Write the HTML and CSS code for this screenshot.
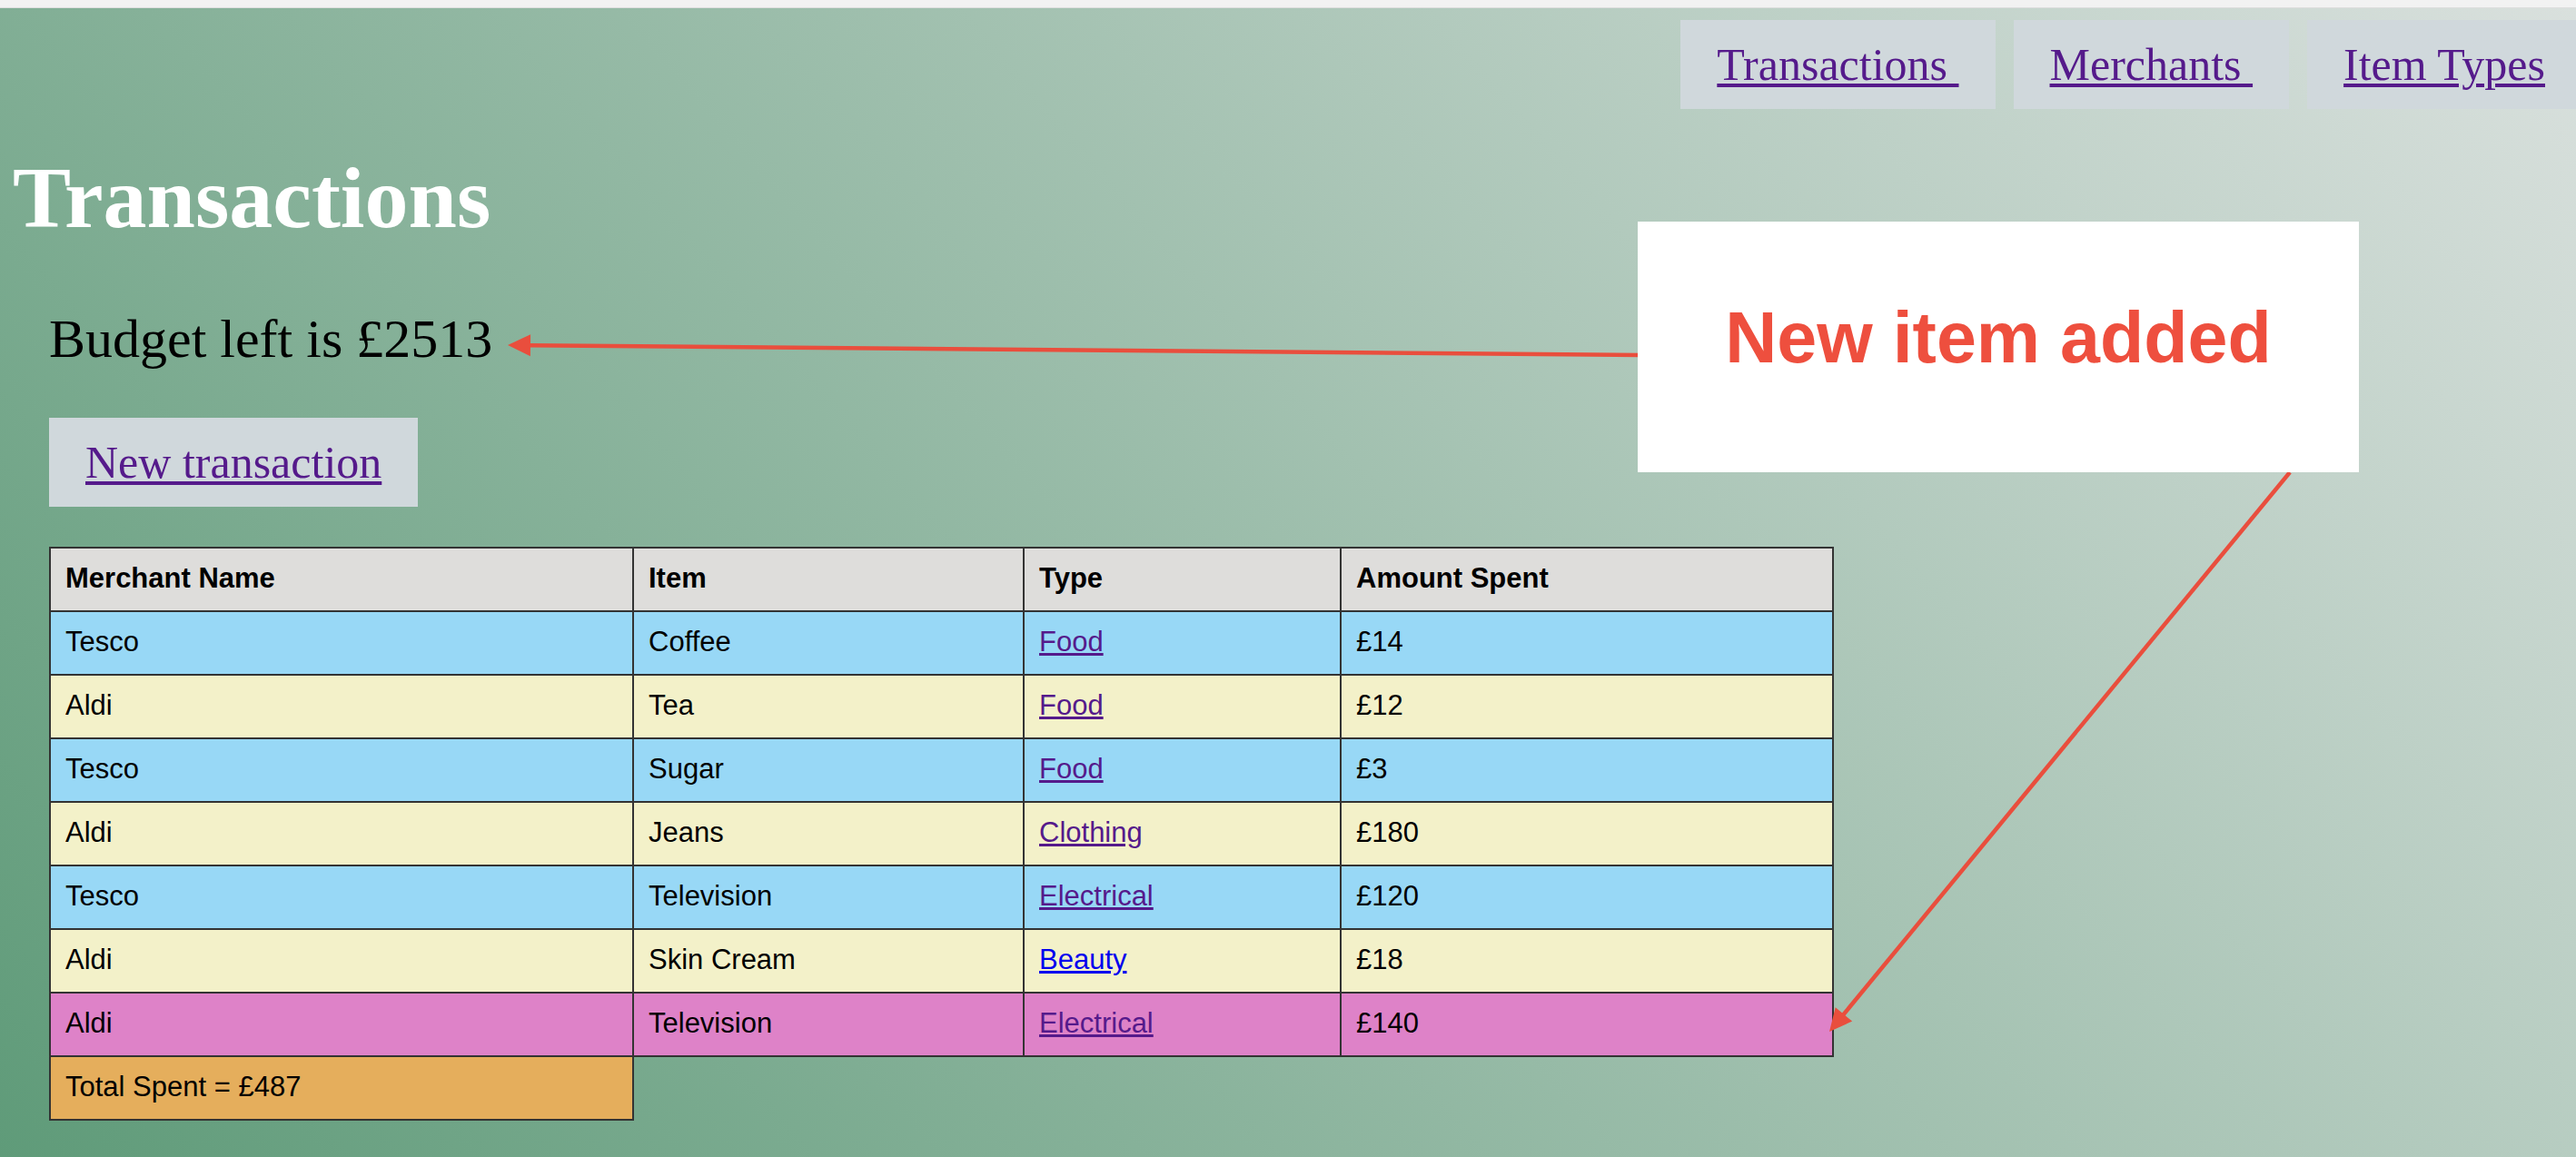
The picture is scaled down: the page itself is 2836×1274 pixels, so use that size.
FILE: index.html
```html
<!DOCTYPE html>
<html lang="en">
<head>
<meta charset="utf-8">
<title>Transactions</title>
<link rel="stylesheet" href="styles.css">
</head>
<body>
<div class="chrome"></div>
<div class="page">
  <nav class="nav">
    <a class="nav-btn" href="#">Transactions&nbsp;</a>
    <a class="nav-btn" href="#">Merchants&nbsp;</a>
    <a class="nav-btn" href="#">Item Types</a>
  </nav>
  <h1 class="title">Transactions</h1>
  <div class="content">
    <p class="budget">Budget left is £2513</p>
    <div class="actions"><a class="btn" href="#">New transaction</a></div>
    <table class="tx">
      <colgroup>
        <col class="c1"><col class="c2"><col class="c3"><col class="c4">
      </colgroup>
      <thead>
        <tr class="head"><th>Merchant Name</th><th>Item</th><th>Type</th><th>Amount Spent</th></tr>
      </thead>
      <tbody>
        <tr class="blue"><td>Tesco</td><td>Coffee</td><td><a href="#">Food</a></td><td>£14</td></tr>
        <tr class="yellow"><td>Aldi</td><td>Tea</td><td><a href="#">Food</a></td><td>£12</td></tr>
        <tr class="blue"><td>Tesco</td><td>Sugar</td><td><a href="#">Food</a></td><td>£3</td></tr>
        <tr class="yellow"><td>Aldi</td><td>Jeans</td><td><a href="#">Clothing</a></td><td>£180</td></tr>
        <tr class="blue"><td>Tesco</td><td>Television</td><td><a href="#">Electrical</a></td><td>£120</td></tr>
        <tr class="yellow"><td>Aldi</td><td>Skin Cream</td><td><a class="fresh" href="#new">Beauty</a></td><td>£18</td></tr>
        <tr class="pink"><td>Aldi</td><td>Television</td><td><a href="#">Electrical</a></td><td>£140</td></tr>
        <tr class="total"><td>Total Spent = £487</td></tr>
      </tbody>
    </table>
  </div>
</div>
<svg class="arrows" width="2836" height="1274" viewBox="0 0 2836 1274">
  <line x1="1806" y1="391" x2="582" y2="380.2" stroke="#e94e3d" stroke-width="4.5"/>
  <polygon points="559,380 584.1,368.2 583.9,392.2" fill="#e94e3d"/>
  <line x1="2521" y1="520" x2="2028" y2="1119" stroke="#e94e3d" stroke-width="4.5"/>
  <polygon points="2014,1136 2039.2,1124.6 2020.7,1109.3" fill="#e94e3d"/>
</svg>
<div class="callout">New item added</div>
</body>
</html>
```

FILE: styles.css
```css
html, body {
  margin: 0;
  padding: 0;
}
body {
  position: relative;
  width: 2836px;
  height: 1274px;
  overflow: hidden;
  font-family: "Liberation Serif", "Times New Roman", serif;
}
.chrome {
  height: 8px;
  background: #f2f2f2;
  border-bottom: 1px solid #dedede;
}
.page {
  height: 1265px;
  box-sizing: border-box;
  padding: 13px 0 0 14px;
  background: linear-gradient(49deg, #5f9b79 0%, #d9e0dd 100%);
}
.nav {
  display: flex;
  justify-content: flex-end;
  gap: 20px;
  margin-right: -6px;
}
.nav-btn, .btn {
  display: block;
  background: #d0d8dc;
  padding: 20px 40px;
  font-size: 50px;
  line-height: 58px;
  color: #551a8b;
  white-space: nowrap;
  text-decoration: underline;
  text-decoration-thickness: 3.5px;
  text-underline-offset: 4px;
}
.title {
  margin: 43px 0 0;
  font-size: 96px;
  line-height: 110px;
  font-weight: bold;
  color: #ffffff;
}
.content {
  margin-left: 40px;
}
.budget {
  margin: 65px 0 0;
  font-size: 60px;
  line-height: 70px;
  color: #000000;
}
.actions {
  display: flex;
  margin-top: 52px;
}
.tx {
  margin-top: 44px;
  border-collapse: collapse;
  table-layout: fixed;
  width: 1963px;
  font-family: "Liberation Sans", Arial, sans-serif;
  font-size: 31px;
  line-height: 36px;
  color: #000000;
}
.c1 { width: 642px; }
.c2 { width: 430px; }
.c3 { width: 349px; }
.c4 { width: 542px; }
.tx th, .tx td {
  border: 2px solid #333333;
  padding: 15px 16px 17px;
  text-align: left;
  vertical-align: top;
}
.tx th {
  font-weight: bold;
}
.tx a {
  color: #551a8b;
  text-decoration: underline;
}
.tx a.fresh {
  color: #0000ee;
}
.head { background: #dedddb; }
.blue { background: #98d8f6; }
.yellow { background: #f3f1c9; }
.pink { background: #de82c8; }
.total td { background: #e5ae5c; }
.arrows {
  position: absolute;
  left: 0;
  top: 0;
  pointer-events: none;
}
.callout {
  position: absolute;
  left: 1803px;
  top: 244px;
  width: 794px;
  height: 276px;
  box-sizing: border-box;
  padding-top: 83px;
  background: #ffffff;
  text-align: center;
  font-family: "Liberation Sans", Arial, sans-serif;
  font-weight: bold;
  font-size: 79px;
  line-height: 90px;
  color: #ee4f3e;
}
```
